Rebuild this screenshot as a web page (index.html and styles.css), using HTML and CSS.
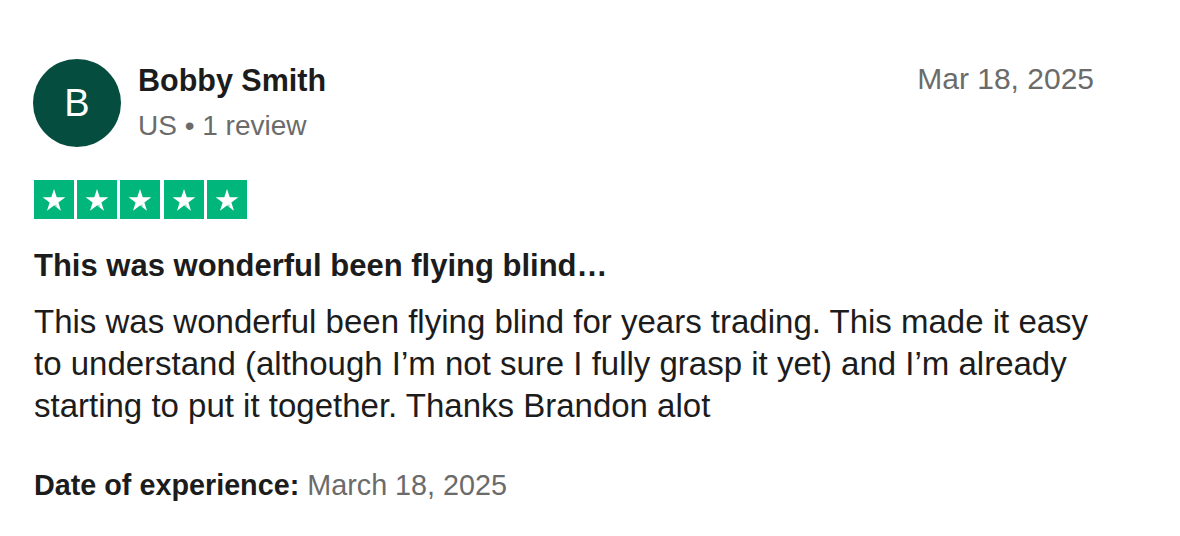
FILE: index.html
```html
<!DOCTYPE html>
<html>
<head>
<meta charset="utf-8">
<link rel="stylesheet" href="styles.css">
</head>
<body>
<article class="review">
  <header class="head">
    <div class="avatar">B</div>
    <div class="who">
      <div class="name">Bobby Smith</div>
      <div class="meta">US • 1 review</div>
    </div>
    <div class="date">Mar 18, 2025</div>
  </header>
  <div class="stars">
    <span class="star"><svg viewBox="0 0 24 24"><path d="M12 3.2l2.2 6.6h6.9l-5.6 4.1 2.1 6.6L12 16.4l-5.6 4.1 2.1-6.6-5.6-4.1h6.9z" fill="#fff"/><path d="M13.9 15.3l-1.9 1.1 2.3 1.7z" fill="#00b67a" opacity=".45"/></svg></span>
    <span class="star"><svg viewBox="0 0 24 24"><path d="M12 3.2l2.2 6.6h6.9l-5.6 4.1 2.1 6.6L12 16.4l-5.6 4.1 2.1-6.6-5.6-4.1h6.9z" fill="#fff"/><path d="M13.9 15.3l-1.9 1.1 2.3 1.7z" fill="#00b67a" opacity=".45"/></svg></span>
    <span class="star"><svg viewBox="0 0 24 24"><path d="M12 3.2l2.2 6.6h6.9l-5.6 4.1 2.1 6.6L12 16.4l-5.6 4.1 2.1-6.6-5.6-4.1h6.9z" fill="#fff"/><path d="M13.9 15.3l-1.9 1.1 2.3 1.7z" fill="#00b67a" opacity=".45"/></svg></span>
    <span class="star"><svg viewBox="0 0 24 24"><path d="M12 3.2l2.2 6.6h6.9l-5.6 4.1 2.1 6.6L12 16.4l-5.6 4.1 2.1-6.6-5.6-4.1h6.9z" fill="#fff"/><path d="M13.9 15.3l-1.9 1.1 2.3 1.7z" fill="#00b67a" opacity=".45"/></svg></span>
    <span class="star"><svg viewBox="0 0 24 24"><path d="M12 3.2l2.2 6.6h6.9l-5.6 4.1 2.1 6.6L12 16.4l-5.6 4.1 2.1-6.6-5.6-4.1h6.9z" fill="#fff"/><path d="M13.9 15.3l-1.9 1.1 2.3 1.7z" fill="#00b67a" opacity=".45"/></svg></span>
  </div>
  <h2 class="title">This was wonderful been flying blind…</h2>
  <p class="body">This was wonderful been flying blind for years trading. This made it easy to understand (although I’m not sure I fully grasp it yet) and I’m already starting to put it together. Thanks Brandon alot</p>
  <p class="exp"><b>Date of experience:</b> <span>March 18, 2025</span></p>
</article>
</body>
</html>
```
FILE: styles.css
```css
html, body {
  margin: 0;
  padding: 0;
  background: #fff;
}
body {
  font-family: "Liberation Sans", Arial, sans-serif;
  color: #1c1c1c;
}
.review {
  width: 1060px;
  padding: 59px 0 0 34px;
}
.head {
  display: flex;
  align-items: flex-start;
}
.avatar {
  width: 88px;
  height: 88px;
  border-radius: 50%;
  background: #054d3e;
  color: #fff;
  font-size: 38px;
  display: flex;
  align-items: center;
  justify-content: center;
  flex: none;
  margin-left: -1px;
}
.who {
  margin-left: 17px;
  flex: 1;
  padding-top: 3px;
}
.name {
  font-weight: 700;
  font-size: 30.5px;
  line-height: 36px;
}
.meta {
  font-size: 28px;
  line-height: 36px;
  color: #6b6b6b;
  margin-top: 10px;
}
.date {
  font-size: 30px;
  color: #6b6b6b;
  line-height: 36px;
  padding-top: 2px;
}
.stars {
  display: flex;
  gap: 3.2px;
  margin-top: 33px;
}
.star {
  width: 40px;
  height: 39px;
  background: #00b67a;
  display: flex;
  align-items: center;
  justify-content: center;
}
.star svg {
  width: 30px;
  height: 30px;
}
.title {
  font-size: 31px;
  font-weight: 700;
  margin: 29px 0 0;
  line-height: 36px;
}
.body {
  font-size: 33px;
  line-height: 42px;
  margin: 17px 0 0;
}
.exp {
  font-size: 28.75px;
  margin: 41px 0 0;
  line-height: 34px;
}
.exp span {
  color: #6b6b6b;
}
```
